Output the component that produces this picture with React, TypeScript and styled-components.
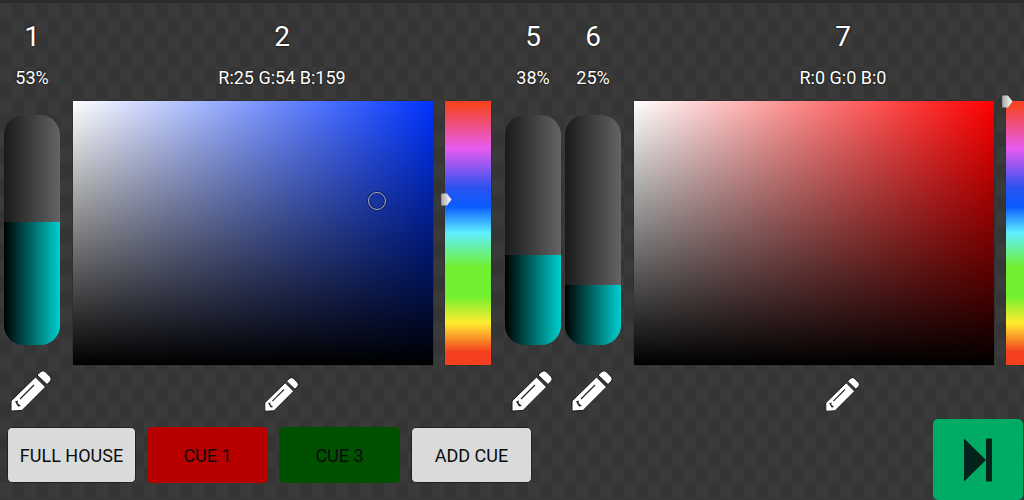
import React from "react";
import styled, { createGlobalStyle } from "styled-components";

const Global = createGlobalStyle`
  html, body { margin: 0; padding: 0; background: #383838; }
  body { font-family: Roboto, "Liberation Sans", sans-serif; }
`;

const Page = styled.div`
  width: 1024px;
  height: 500px;
  overflow: hidden;
  display: flex;
  flex-direction: column;
  background-color: #363636;
  background-image: repeating-conic-gradient(#3a3a3a 0 25%, #353535 0 50%);
  background-size: 24px 32px;
  background-position: 12px 3px;
`;

const TopEdge = styled.div`
  height: 3px;
  flex: none;
  background: #2b2b2b;
`;

const Channels = styled.div`
  display: flex;
  flex: none;
  padding: 14px 0 0 2px;
`;

const Channel = styled.section<{ $wide?: boolean; $gap: number }>`
  flex: none;
  width: ${(p) => (p.$wide ? 418 : 60)}px;
  margin-left: ${(p) => p.$gap}px;
  display: flex;
  flex-direction: column;
  align-items: center;
`;

const Title = styled.div`
  height: 40px;
  line-height: 40px;
  font-size: 28px;
  color: #fff;
  text-shadow: 0 0 2px #000;
`;

const Value = styled.div`
  height: 24px;
  line-height: 24px;
  margin: 9px 0 10px;
  font-size: 18px;
  color: #fff;
  white-space: nowrap;
  text-shadow: 0 0 2px #000;
`;

const Control = styled.div`
  height: 265px;
  width: 100%;
  display: flex;
  align-items: flex-start;
  justify-content: center;
  gap: 12px;
`;

const Fader = styled.div`
  position: relative;
  width: 56px;
  height: 230px;
  margin-top: 15px;
  border-radius: 20px;
  overflow: hidden;
  background: linear-gradient(90deg, #1a1a1a 0%, #3e3e3e 50%, #646464 100%);
`;

const FaderFill = styled.div`
  position: absolute;
  left: 0;
  right: 0;
  bottom: 0;
  background: linear-gradient(90deg, #000 0%, #00d0d0 100%);
`;

const ColorBox = styled.div<{ $hue: string }>`
  position: relative;
  flex: none;
  width: 360px;
  height: 264px;
  margin-top: 1px;
  background:
    linear-gradient(180deg, rgba(0, 0, 0, 0) 0%, #000 100%),
    linear-gradient(90deg, #fff 0%, ${(p) => p.$hue} 100%);
  box-shadow: 0 0 1px #111;
`;

const Picker = styled.div`
  position: absolute;
  width: 16px;
  height: 16px;
  margin: -9px 0 0 -9px;
  border: 1px solid #a8afc4;
  border-radius: 50%;
  box-shadow: 0 0 0 1px #10205a, inset 0 0 0 1px rgba(10, 20, 70, 0.6);
`;

const HueStrip = styled.div`
  position: relative;
  flex: none;
  width: 46px;
  height: 264px;
  margin-top: 1px;
  box-shadow: 0 0 1px #222;
  background: linear-gradient(
    180deg,
    #f44020 0%,
    #f44528 2%,
    #e85cf0 18%,
    #2a52f0 33%,
    #0a5cff 40%,
    #60f0ff 50%,
    #72f030 63%,
    #72f030 74%,
    #ffee30 84%,
    #f44020 95%,
    #f44020 100%
  );
`;

const Thumb = styled.svg`
  position: absolute;
  left: -4px;
  width: 11px;
  height: 13px;
  margin-top: -6px;
`;

const Edit = styled.div`
  height: 47px;
  box-sizing: border-box;
  padding-right: 2px;
  display: flex;
  align-items: flex-end;
  justify-content: center;
  width: 100%;
`;

const Pencil = styled.svg<{ $size: number }>`
  width: ${(p) => p.$size}px;
  height: ${(p) => p.$size}px;
  display: block;
`;

const Footer = styled.div`
  flex: 1;
  display: flex;
  align-items: flex-start;
  padding: 0 1px 0 7px;
`;

const Cues = styled.div`
  display: flex;
  gap: 11px;
  margin-top: 15px;
`;

const Cue = styled.button<{ $bg: string; $width: number }>`
  width: ${(p) => p.$width}px;
  height: 56px;
  padding: 0;
  box-sizing: border-box;
  border: 1px solid ${(p) => (p.$bg === "#d9dbdb" ? "#222" : "transparent")};
  border-radius: 5px;
  background: ${(p) => p.$bg};
  color: #0c0c0c;
  font: 400 18px Roboto, "Liberation Sans", sans-serif;
`;

const Next = styled.button`
  margin: 7px 0 0 auto;
  width: 90px;
  height: 81px;
  border: 0;
  padding: 0;
  border-radius: 5px;
  background: #00ab66;
  display: flex;
  align-items: center;
  justify-content: center;
`;

const NextIcon = styled.svg`
  width: 30px;
  height: 44px;
  display: block;
`;

const PencilIcon = ({ size }: { size: number }) => (
  <Pencil $size={size} viewBox="0 0 42 42">
    <path
      d="M27 5 L31 1.5 Q33 0 35 1.5 L40.5 7 Q42 9 40.5 11 L37 14.5 Z"
      fill="#fff"
      stroke="#111"
      strokeWidth="1"
    />
    <path
      d="M25.5 7 L35.5 17 L12 40.5 L2.5 41 Q1 41 1 39.5 V31 Z"
      fill="#fff"
      stroke="#111"
      strokeWidth="1"
    />
    <path d="M24 15 L10 29" stroke="#222" strokeWidth="1.3" fill="none" />
    <path d="M5 31.5 L8 30.5 L7.5 33 L11 36 L8 36.5 Z" fill="#222" />
  </Pencil>
);

const ThumbIcon = ({ top }: { top: number }) => (
  <Thumb style={{ top }} viewBox="0 0 11 13">
    <defs>
      <linearGradient id="thumbShade" x1="0" x2="1" y1="0" y2="0">
        <stop offset="0" stopColor="#a8a8a8" />
        <stop offset="1" stopColor="#fff" />
      </linearGradient>
    </defs>
    <path d="M1 .5 H6 L10.5 6.5 L6 12.5 H1 Q.2 12.5 .2 11.5 V1.5 Q.2 .5 1 .5 Z" fill="url(#thumbShade)" />
  </Thumb>
);

const FaderChannel = ({ id, pct, gap }: { id: number; pct: number; gap: number }) => (
  <Channel $gap={gap}>
    <Title>{id}</Title>
    <Value>{pct}%</Value>
    <Control>
      <Fader>
        <FaderFill style={{ height: Math.round(pct * 2.25 + 4) }} />
      </Fader>
    </Control>
    <Edit>
      <PencilIcon size={42} />
    </Edit>
  </Channel>
);

const ColorChannel = ({
  id,
  label,
  hue,
  gap,
  thumb,
  picker,
}: {
  id: number;
  label: string;
  hue: string;
  gap: number;
  thumb: number;
  picker?: { x: number; y: number };
}) => (
  <Channel $wide $gap={gap}>
    <Title>{id}</Title>
    <Value>{label}</Value>
    <Control>
      <ColorBox $hue={hue}>
        {picker && <Picker style={{ left: picker.x, top: picker.y }} />}
      </ColorBox>
      <HueStrip>
        <ThumbIcon top={thumb} />
      </HueStrip>
    </Control>
    <Edit>
      <PencilIcon size={35} />
    </Edit>
  </Channel>
);

export default function App() {
  return (
    <Page>
      <Global />
      <TopEdge />
      <Channels>
        <FaderChannel id={1} pct={53} gap={0} />
        <ColorChannel
          id={2}
          label="R:25 G:54 B:159"
          hue="#0033ff"
          gap={11}
          thumb={98}
          picker={{ x: 304, y: 100 }}
        />
        <FaderChannel id={5} pct={38} gap={12} />
        <FaderChannel id={6} pct={25} gap={0} />
        <ColorChannel id={7} label="R:0 G:0 B:0" hue="#ff0000" gap={11} thumb={0} />
      </Channels>
      <Footer>
        <Cues>
          <Cue $bg="#d9dbdb" $width={129}>FULL HOUSE</Cue>
          <Cue $bg="#b80000" $width={121}>CUE 1</Cue>
          <Cue $bg="#005000" $width={121}>CUE 3</Cue>
          <Cue $bg="#d9dbdb" $width={121}>ADD CUE</Cue>
        </Cues>
        <Next aria-label="Next">
          <NextIcon viewBox="0 0 30 44">
            <path d="M1 .5 L23 22 L1 43.5 Z" fill="#03241a" />
            <rect x="23" y="0.5" width="6" height="43" rx="1" fill="#03241a" />
          </NextIcon>
        </Next>
      </Footer>
    </Page>
  );
}
